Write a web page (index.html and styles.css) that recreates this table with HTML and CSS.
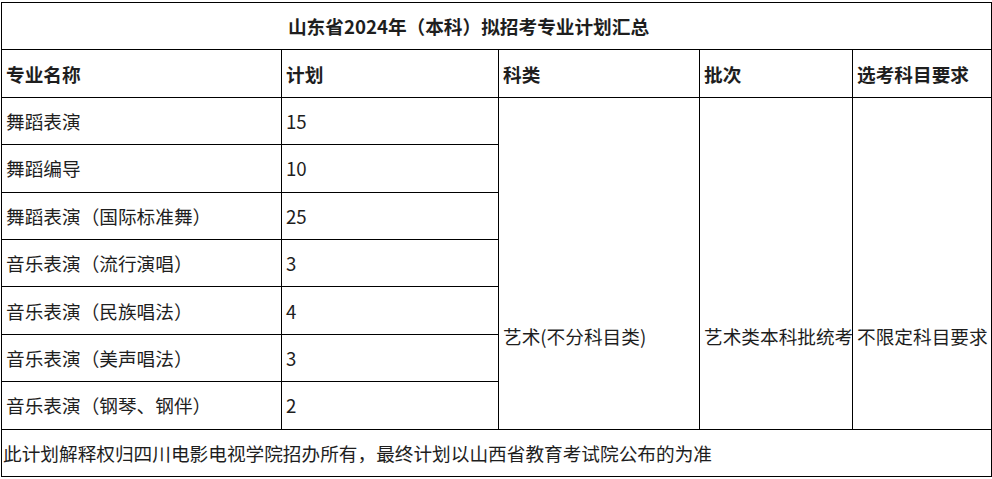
FILE: index.html
```html
<!DOCTYPE html>
<html lang="zh-CN">
<head>
<meta charset="utf-8">
<title>山东省2024年（本科）拟招考专业计划汇总</title>
<link rel="stylesheet" href="styles.css">
</head>
<body>
<table class="plan">
  <colgroup>
    <col class="c1"><col class="c2"><col class="c3"><col class="c4"><col class="c5">
  </colgroup>
  <tbody>
    <tr><td class="title" colspan="5">山东省2024年（本科）拟招考专业计划汇总</td></tr>
    <tr class="head">
      <td>专业名称</td><td>计划</td><td>科类</td><td>批次</td><td>选考科目要求</td>
    </tr>
    <tr>
      <td>舞蹈表演</td><td>15</td>
      <td class="merged" rowspan="7">艺术(不分科目类)</td>
      <td class="merged" rowspan="7">艺术类本科批统考</td>
      <td class="merged" rowspan="7">不限定科目要求</td>
    </tr>
    <tr><td>舞蹈编导</td><td>10</td></tr>
    <tr><td>舞蹈表演（国际标准舞）</td><td>25</td></tr>
    <tr><td>音乐表演（流行演唱）</td><td>3</td></tr>
    <tr><td>音乐表演（民族唱法）</td><td>4</td></tr>
    <tr><td>音乐表演（美声唱法）</td><td>3</td></tr>
    <tr><td>音乐表演（钢琴、钢伴）</td><td>2</td></tr>
    <tr><td class="note" colspan="5">此计划解释权归四川电影电视学院招办所有，最终计划以山西省教育考试院公布的为准</td></tr>
  </tbody>
</table>
</body>
</html>
```
FILE: styles.css
```css
html, body {
  margin: 0;
  padding: 0;
  background: #fff;
}
body {
  font-family: "Noto Sans CJK SC", "Noto Sans", sans-serif;
  font-size: 18.67px;
  color: #1e1e1e;
}
.plan {
  border-collapse: collapse;
  table-layout: fixed;
  width: 990px;
  margin: 2px 0 0 1px;
}
.c1 { width: 280px; }
.c2 { width: 217px; }
.c3 { width: 201px; }
.c4 { width: 153px; }
.c5 { width: 139px; }
.plan tr { height: 47.4px; }
.plan td {
  border: 1px solid #000;
  padding: 0 0 0 4px;
  vertical-align: middle;
  white-space: nowrap;
  line-height: 24px;
  overflow: hidden;
}
.plan .title {
  font-weight: bold;
  text-align: center;
  padding-right: 60px;
}
.plan .head td {
  font-weight: bold;
}
.plan .merged {
  padding-top: 145px;
}
.plan .note {
  padding-left: 1px;
}
```
